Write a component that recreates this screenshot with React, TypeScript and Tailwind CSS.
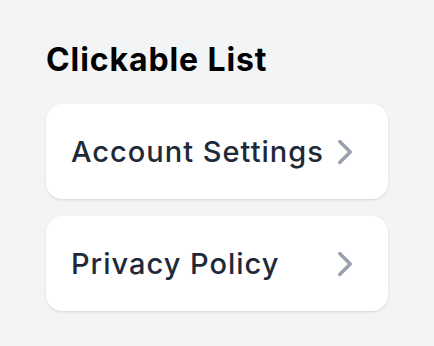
import React from "react";
import { ChevronRight } from "lucide-react";

const items = ["Account Settings", "Privacy Policy"];

export default function App() {
  return (
    <div className="min-h-screen bg-gray-100 px-[46px] pt-[40px] font-['Inter',sans-serif]">
      <h2 className="text-[32px] leading-[40px] font-bold tracking-[0.9px] text-black">Clickable List</h2>

      <div className="mt-[24px] flex flex-col gap-[17px]">
        {items.map((label) => (
          <button
            key={label}
            className="flex h-[95px] w-full items-center justify-between rounded-[16px] bg-white pl-[25px] pr-[22px] shadow-sm text-left"
          >
            <span className="whitespace-nowrap text-[29px] font-medium tracking-[1px] text-gray-800">{label}</span>
            <ChevronRight size={42} className="shrink-0 text-gray-400" />
          </button>
        ))}
      </div>
    </div>
  );
}
